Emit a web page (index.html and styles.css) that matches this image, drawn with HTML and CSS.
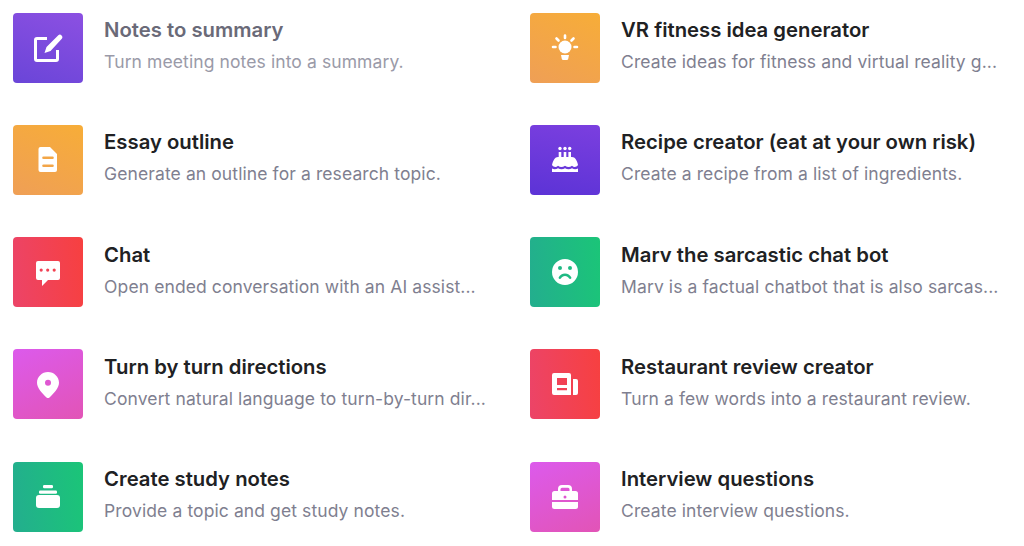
FILE: index.html
```html
<!DOCTYPE html>
<html lang="en">
<head>
  <meta charset="UTF-8" />
  <title>Examples</title>
  <link rel="stylesheet" href="styles.css">
</head>
<body>
  <div class="examples">

    <div class="example faded">
      <div class="tile tile-purple">
        <svg viewBox="0 0 30 30"><path class="line" d="M14 5.500H4a1.500 1.500 0 0 0-1.500 1.500V26A1.500 1.500 0 0 0 4 27.500H23a1.500 1.500 0 0 0 1.500-1.500V17"/><path d="M25.300 2.200a2.500 2.500 0 0 1 3.500 3.500L17.500 18l-6 2 2-6z"/></svg>
      </div>
      <div class="text">
        <div class="title">Notes to summary</div>
        <div class="desc">Turn meeting notes into a summary.</div>
      </div>
    </div>

    <div class="example">
      <div class="tile tile-orange">
        <svg viewBox="0 0 30 30"><circle cx="15" cy="14" r="6.500"/><path d="M11 22h8l-.8 4a1.500 1.500 0 0 1-1.500 1h-3.400a1.500 1.500 0 0 1-1.500-1z"/><path class="ray" d="M15 2.500v2.500M6.500 5.500l2 2M23.500 5.500l-2 2M3 14h2.500M24.500 14H27"/></svg>
      </div>
      <div class="text">
        <div class="title">VR fitness idea generator</div>
        <div class="desc">Create ideas for fitness and virtual reality g...</div>
      </div>
    </div>

    <div class="example">
      <div class="tile tile-orange">
        <svg viewBox="0 0 30 30"><path fill-rule="evenodd" d="M7.500 2H17l7 7v16a2 2 0 0 1-2 2H7.500a2 2 0 0 1-2-2V4a2 2 0 0 1 2-2zM10.500 11.500a1.300 1.300 0 0 0 0 2.600h9a1.300 1.300 0 0 0 0-2.600zM10.500 19.500a1.300 1.300 0 0 0 0 2.600h9a1.300 1.300 0 0 0 0-2.600z"/></svg>
      </div>
      <div class="text">
        <div class="title">Essay outline</div>
        <div class="desc">Generate an outline for a research topic.</div>
      </div>
    </div>

    <div class="example">
      <div class="tile tile-deep">
        <svg viewBox="0 0 30 30"><circle cx="10" cy="3.500" r="1.700"/><circle cx="15" cy="3.500" r="1.700"/><circle cx="19.700" cy="3.500" r="1.700"/><path d="M8.700 7h2.600v6H8.700zM13.700 7h2.600v6h-2.600zM18.400 7H21v6h-2.600z"/><path d="M8 12h14c3 0 5 3.500 6 8-2 2.500-4 2.500-6 .8-2.200 1.700-4.500 1.700-7 0-2.500 1.700-4.800 1.700-7 0-2 1.700-4 1.700-6-.8 1-4.500 3-8 6-8z"/><path d="M2 23.500c2 1 4 1 6-.3 2.200 1.300 4.800 1.300 7 0 2.200 1.300 4.800 1.300 7 0 2 1.300 4 1.300 6 .3V27H2z"/></svg>
      </div>
      <div class="text">
        <div class="title">Recipe creator (eat at your own risk)</div>
        <div class="desc">Create a recipe from a list of ingredients.</div>
      </div>
    </div>

    <div class="example">
      <div class="tile tile-red">
        <svg viewBox="0 0 30 30"><path fill-rule="evenodd" d="M5 4h20a2 2 0 0 1 2 2v15a2 2 0 0 1-2 2H15l-6 6v-6H5a2 2 0 0 1-2-2V6a2 2 0 0 1 2-2zM8.200 11.500a1.600 1.600 0 1 0 0 3.200 1.600 1.600 0 0 0 0-3.200zM14.700 11.500a1.600 1.600 0 1 0 0 3.200 1.600 1.600 0 0 0 0-3.200zM21.200 11.500a1.600 1.600 0 1 0 0 3.200 1.600 1.600 0 0 0 0-3.200z"/></svg>
      </div>
      <div class="text">
        <div class="title">Chat</div>
        <div class="desc">Open ended conversation with an AI assist...</div>
      </div>
    </div>

    <div class="example">
      <div class="tile tile-green">
        <svg viewBox="0 0 30 30"><path fill-rule="evenodd" d="M15 2a13 13 0 1 1 0 26 13 13 0 0 1 0-26zM10 9a2 2 0 1 0 0 4 2 2 0 0 0 0-4zM20 9a2 2 0 1 0 0 4 2 2 0 0 0 0-4zM15 16.500c-2.800 0-5 1.500-6.300 3.800a1.300 1.300 0 0 0 2.200 1.300c.9-1.500 2.300-2.500 4.100-2.500s3.200 1 4.100 2.500a1.300 1.300 0 0 0 2.200-1.300c-1.300-2.300-3.500-3.800-6.300-3.800z"/></svg>
      </div>
      <div class="text">
        <div class="title">Marv the sarcastic chat bot</div>
        <div class="desc">Marv is a factual chatbot that is also sarcas...</div>
      </div>
    </div>

    <div class="example">
      <div class="tile tile-pink">
        <svg viewBox="0 0 30 30"><path fill-rule="evenodd" d="M15 3c6 0 11 4.800 11 10.800 0 5.500-5.500 11-9.500 14.600a2.200 2.200 0 0 1-3 0C9.500 24.800 4 19.300 4 13.800 4 7.800 9 3 15 3zm0 7.700a3 3 0 1 0 0 6 3 3 0 0 0 0-6z"/></svg>
      </div>
      <div class="text">
        <div class="title">Turn by turn directions</div>
        <div class="desc">Convert natural language to turn-by-turn dir...</div>
      </div>
    </div>

    <div class="example">
      <div class="tile tile-red">
        <svg viewBox="0 0 30 30"><path fill-rule="evenodd" d="M4 4h15a2 2 0 0 1 2 2v20H4a2 2 0 0 1-2-2V6a2 2 0 0 1 2-2zM7 9v7h10V9zM7 19v2.200h10V19z"/><path d="M23 10h3a2 2 0 0 1 2 2v12a2 2 0 0 1-2 2h-3z"/></svg>
      </div>
      <div class="text">
        <div class="title">Restaurant review creator</div>
        <div class="desc">Turn a few words into a restaurant review.</div>
      </div>
    </div>

    <div class="example">
      <div class="tile tile-green">
        <svg viewBox="0 0 30 30"><rect x="10" y="3" width="10" height="3.200" rx="1.200"/><rect x="6" y="8.500" width="18" height="3.200" rx="1.200"/><rect x="3" y="13" width="24" height="13" rx="3"/></svg>
      </div>
      <div class="text">
        <div class="title">Create study notes</div>
        <div class="desc">Provide a topic and get study notes.</div>
      </div>
    </div>

    <div class="example">
      <div class="tile tile-pink">
        <svg viewBox="0 0 30 30"><path fill-rule="evenodd" d="M12 3h6a4 4 0 0 1 4 4v2h3.500A2.500 2.500 0 0 1 28 11.500V18H2v-6.500A2.500 2.500 0 0 1 4.500 9H8V7a4 4 0 0 1 4-4zm0 2.800A1.500 1.500 0 0 0 10.500 7.300V9h9V7.300A1.500 1.500 0 0 0 18 5.800zM15 13.500a1.500 1.500 0 1 0 0 3 1.500 1.500 0 0 0 0-3z"/><path d="M2 20h26v4.500a2.500 2.500 0 0 1-2.500 2.500h-21A2.500 2.500 0 0 1 2 24.500z"/></svg>
      </div>
      <div class="text">
        <div class="title">Interview questions</div>
        <div class="desc">Create interview questions.</div>
      </div>
    </div>

  </div>
</body>
</html>
```

FILE: styles.css
```css
body {
  font-family: 'Inter', sans-serif;
  background: white;
  margin: 0;
  overflow: hidden;
}

.examples {
  display: grid;
  grid-template-columns: 475px 475px;
  column-gap: 42px;
  row-gap: 42.3px;
  padding: 12.5px 0 0 12.6px;
}

.example {
  display: flex;
  gap: 21px;
  height: 70px;
  min-width: 0;
}

.tile {
  flex: none;
  width: 70.5px;
  height: 70px;
  border-radius: 4px;
  display: flex;
  align-items: center;
  justify-content: center;
}

.tile svg {
  width: 30px;
  height: 30px;
  fill: white;
}

.tile .line {
  fill: none;
  stroke: white;
  stroke-width: 3;
}

.tile .ray {
  fill: none;
  stroke: white;
  stroke-width: 2.6;
  stroke-linecap: round;
}

.tile-purple { background: linear-gradient(200deg, #8c50e2, #6a45d8); }
.tile-deep { background: linear-gradient(190deg, #7b3fdf, #5c33d6); }
.tile-orange { background: linear-gradient(205deg, #f7ad38, #ef9f56); }
.tile-red { background: linear-gradient(85deg, #ec4468, #f74040); }
.tile-pink { background: linear-gradient(155deg, #dc5aec, #e254b6); }
.tile-green { background: linear-gradient(85deg, #23ae8e, #1bc578); }

.text {
  flex: 1;
  min-width: 0;
  padding-top: 4.5px;
}

.title {
  font-size: 20.3px;
  line-height: 26px;
  font-weight: 600;
  color: #202123;
}

.desc {
  margin-top: 6px;
  font-size: 17.5px;
  letter-spacing: 0.1px;
  line-height: 26px;
  color: #7f7f90;
  white-space: nowrap;
}

.faded .title { color: #6a6a78; }
.faded .desc { color: #9a9aa8; }
```
